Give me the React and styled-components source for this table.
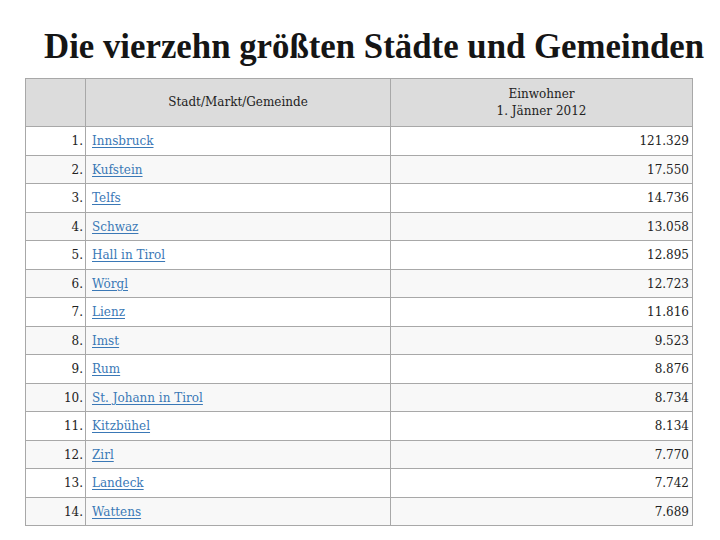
import React from 'react'
import styled, { createGlobalStyle } from 'styled-components'

const GlobalStyle = createGlobalStyle`
body{
  margin:0;
  background:#fff;
  font-family:'Liberation Serif','DejaVu Serif',serif;
}
`

const Page = styled.div`
width:720px;
height:540px;
padding:28px 0 0 25px;
box-sizing:border-box;
overflow:hidden;
`

const Title = styled.h1`
margin:0 0 12px 19px;
font-family:'Liberation Serif',serif;
font-weight:bold;
font-size:34.8px;
line-height:38px;
color:#151515;
white-space:nowrap;
`

const Table = styled.table`
width:667px;
table-layout:fixed;
border-collapse:collapse;
border:1px solid #a8a8a8;
font-family:'DejaVu Serif',serif;
font-size:12px;
color:#222;
`

const HeadCell = styled.th`
box-sizing:border-box;
background:#dcdcdc;
border:1px solid #a8a8a8;
font-weight:normal;
height:48px;
padding:0 4px;
line-height:17px;
width:${p => p.$w}px;
`

const Row = styled.tr`
background:${p => p.$alt ? '#f8f8f8' : '#fff'};
height:28.5px;
`

const Cell = styled.td`
border:1px solid #a8a8a8;
padding:1px 6px 0;
white-space:nowrap;
`

const NumCell = styled(Cell)`
text-align:right;
padding-right:2px;
`

const PopCell = styled(Cell)`
text-align:right;
padding-right:3px;
`

const PlaceLink = styled.a`
color:#3a78b6;
text-decoration:underline;
text-underline-offset:2px;
`

const places = [
  ['Innsbruck', '121.329'],
  ['Kufstein', '17.550'],
  ['Telfs', '14.736'],
  ['Schwaz', '13.058'],
  ['Hall in Tirol', '12.895'],
  ['Wörgl', '12.723'],
  ['Lienz', '11.816'],
  ['Imst', '9.523'],
  ['Rum', '8.876'],
  ['St. Johann in Tirol', '8.734'],
  ['Kitzbühel', '8.134'],
  ['Zirl', '7.770'],
  ['Landeck', '7.742'],
  ['Wattens', '7.689'],
]

export default function App() {
  return (
    <Page>
      <GlobalStyle />
      <Title>Die vierzehn größten Städte und Gemeinden</Title>
      <Table>
        <thead>
          <tr>
            <HeadCell $w={60}></HeadCell>
            <HeadCell $w={305}>Stadt/Markt/Gemeinde</HeadCell>
            <HeadCell $w={302}>Einwohner<br />1. Jänner 2012</HeadCell>
          </tr>
        </thead>
        <tbody>
          {places.map(([name, pop], i) => (
            <Row key={name} $alt={i % 2 === 1}>
              <NumCell>{i + 1}.</NumCell>
              <Cell><PlaceLink href="#">{name}</PlaceLink></Cell>
              <PopCell>{pop}</PopCell>
            </Row>
          ))}
        </tbody>
      </Table>
    </Page>
  )
}
